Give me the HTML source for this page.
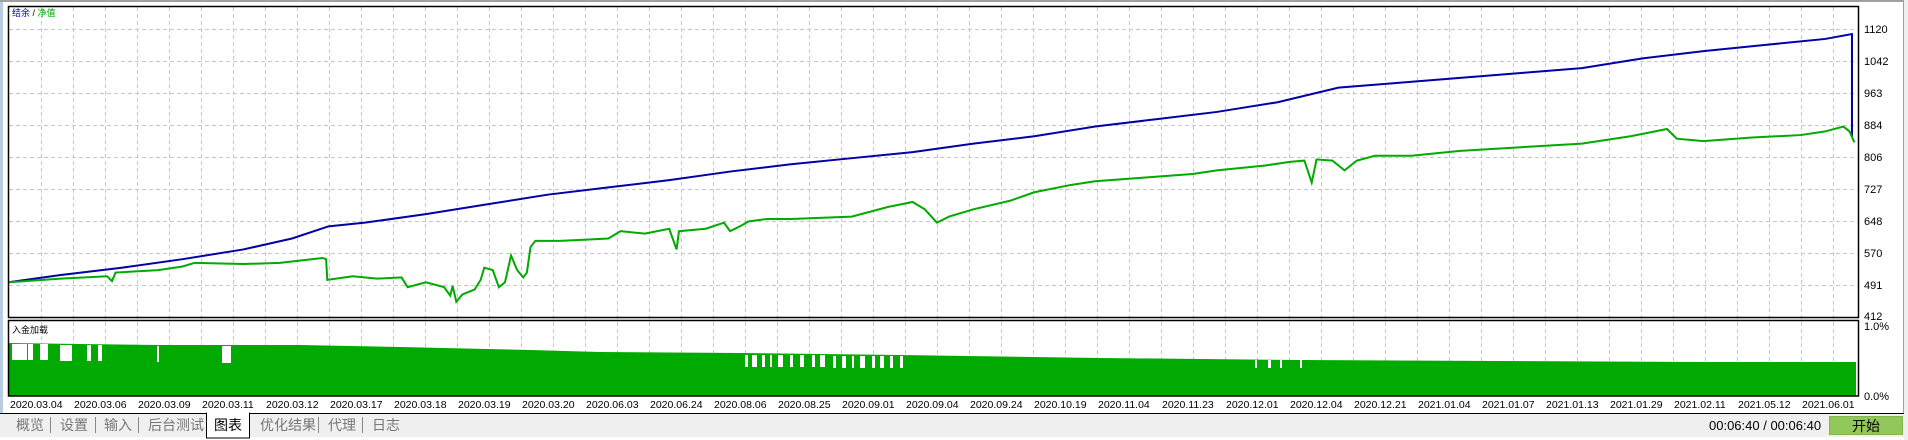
<!DOCTYPE html>
<html><head><meta charset="utf-8"><style>
html,body{margin:0;padding:0;background:#fff;width:1908px;height:440px;overflow:hidden;font-family:"Liberation Sans","Noto Sans CJK SC",sans-serif}
svg{position:absolute;left:0;top:0}
.tab{position:absolute;top:415px;font-size:14px;color:#777;font-family:"Liberation Sans","Noto Sans CJK SC",sans-serif}
.sep{position:absolute;top:417px;width:1px;height:16px;background:#888}
</style></head><body>
<svg width="1908" height="440" xmlns="http://www.w3.org/2000/svg" font-family="Liberation Sans, Noto Sans CJK SC, sans-serif">
<rect x="0" y="0" width="1908" height="440" fill="#fff"/>
<rect x="0" y="0" width="1908" height="2" fill="#a0a0a0"/>
<rect x="0" y="2" width="3" height="438" fill="#b9cde2"/>
<rect x="0" y="413" width="1908" height="27" fill="#f0f0f0"/>
<rect x="0" y="437" width="1908" height="3" fill="#fff"/>
<line x1="0" y1="413.5" x2="1904" y2="413.5" stroke="#000" stroke-width="1"/>
<rect x="1904" y="0" width="4" height="440" fill="#f0f0f0"/>
<line x1="1903.5" y1="2" x2="1903.5" y2="413" stroke="#a0a0a0"/>
<g stroke="#c8c8c8" stroke-width="1" stroke-dasharray="4,3">
<path id="vg" d="M41.5 7V396M73.5 7V396M105.5 7V396M137.5 7V396M169.5 7V396M201.5 7V396M233.5 7V396M265.5 7V396M297.5 7V396M329.5 7V396M361.5 7V396M393.5 7V396M425.5 7V396M457.5 7V396M489.5 7V396M521.5 7V396M553.5 7V396M585.5 7V396M617.5 7V396M649.5 7V396M681.5 7V396M713.5 7V396M745.5 7V396M777.5 7V396M809.5 7V396M841.5 7V396M873.5 7V396M905.5 7V396M937.5 7V396M969.5 7V396M1001.5 7V396M1033.5 7V396M1065.5 7V396M1097.5 7V396M1129.5 7V396M1161.5 7V396M1193.5 7V396M1225.5 7V396M1257.5 7V396M1289.5 7V396M1321.5 7V396M1353.5 7V396M1385.5 7V396M1417.5 7V396M1449.5 7V396M1481.5 7V396M1513.5 7V396M1545.5 7V396M1577.5 7V396M1609.5 7V396M1641.5 7V396M1673.5 7V396M1705.5 7V396M1737.5 7V396M1769.5 7V396M1801.5 7V396M1833.5 7V396"/>
<path d="M9 29.5H1858M9 61.5H1858M9 93.5H1858M9 125.5H1858M9 157.5H1858M9 189.5H1858M9 221.5H1858M9 253.5H1858M9 285.5H1858"/>
</g>
<!-- sub pane fill -->
<g fill="#00aa00">
<polygon points="9,343 80,344 160,345 300,345 400,347 530,350 600,352 740,353 900,355 1100,358 1300,360 1500,361 1700,362 1856,362 1856,396 9,396"/>
</g>
<g fill="#fff">
<rect x="12" y="344" width="15" height="16"/><rect x="28" y="344" width="5" height="16"/><rect x="40" y="344" width="8" height="16"/>
<rect x="60" y="345" width="12" height="16"/><rect x="87" y="345" width="4" height="16"/><rect x="98" y="345" width="4" height="16"/>
<rect x="157" y="346" width="2" height="16"/><rect x="222" y="346" width="9" height="17"/>
<rect x="745" y="355" width="3" height="12"/><rect x="752" y="355" width="5" height="12"/><rect x="762" y="355" width="3" height="12"/><rect x="770" y="355" width="2" height="12"/><rect x="778" y="355" width="5" height="12"/><rect x="790" y="355" width="3" height="12"/><rect x="800" y="355" width="4" height="12"/><rect x="812" y="355" width="3" height="12"/><rect x="820" y="355" width="5" height="12"/><rect x="833" y="356" width="3" height="12"/><rect x="842" y="356" width="4" height="12"/><rect x="852" y="356" width="2" height="12"/><rect x="860" y="356" width="5" height="12"/><rect x="872" y="356" width="3" height="12"/><rect x="880" y="356" width="4" height="12"/><rect x="890" y="356" width="3" height="12"/><rect x="900" y="356" width="3" height="12"/>
<rect x="1255" y="360" width="2" height="8"/><rect x="1268" y="360" width="3" height="8"/><rect x="1280" y="360" width="2" height="8"/><rect x="1300" y="360" width="2" height="8"/>
</g>
<!-- curves -->
<g transform="scale(1.2168)" fill="none" stroke-linejoin="miter">
<polyline stroke="#0000a8" stroke-width="2" vector-effect="non-scaling-stroke" points="7,232 50,226 100,220 150,213 200,205 240,196 270,186 300,183 350,176 400,168 450,160 500,154 550,148 600,141 650,135 700,130 750,125 800,118 850,112 900,104 950,98 1000,92 1050,84 1100,72 1150,68 1200,64 1250,60 1300,56 1350,48 1400,42 1450,37 1500,32 1522,28 1522,112"/>
<polyline stroke="#00aa00" stroke-width="2" vector-effect="non-scaling-stroke" points="7,232 50,229 88,227 92,231 95,224 130,222 150,219 160,216 200,217 230,216 265,212 268,213 269,230 290,227 310,229 330,228 335,236 350,232 365,236 370,243 372,235 375,248 380,242 390,238 395,230 398,220 405,222 410,236 415,232 420,210 425,222 430,228 433,224 436,203 440,198 460,198 480,197 500,196 510,190 530,192 550,188 556,205 558,190 580,188 595,183 600,190 610,185 615,182 630,180 650,180 700,178 730,170 750,166 760,172 770,183 780,178 800,172 830,165 850,158 880,152 900,149 940,146 980,143 1000,140 1040,136 1060,133 1072,132 1078,150 1082,131 1095,132 1105,140 1115,132 1130,128 1160,128 1200,124 1250,121 1300,118 1340,112 1370,106 1378,114 1400,116 1440,113 1480,111 1500,108 1515,104 1520,108 1524,117"/>
</g>
<!-- frames -->
<rect x="8.5" y="6.5" width="1850" height="311" fill="none" stroke="#000" stroke-width="1.5"/>
<rect x="8.5" y="320.5" width="1850" height="75.5" fill="none" stroke="#000" stroke-width="1.5"/>
<text x="12" y="16" font-size="9" fill="#0000a8">结余 <tspan fill="#000">/</tspan> <tspan fill="#00aa00">净值</tspan></text>
<text x="12" y="333" font-size="9" fill="#000">入金加载</text>
<g font-size="11" fill="#000">
<text x="1864" y="33">1120</text><text x="1864" y="65">1042</text><text x="1864" y="97">963</text><text x="1864" y="129">884</text><text x="1864" y="161">806</text><text x="1864" y="193">727</text><text x="1864" y="225">648</text><text x="1864" y="257">570</text><text x="1864" y="289">491</text><text x="1864" y="320">412</text>
<text x="1864" y="330">1.0%</text><text x="1864" y="400">0.0%</text>
</g>
<g font-size="10.5" fill="#000">
<text x="10" y="408">2020.03.04</text><text x="74" y="408">2020.03.06</text><text x="138" y="408">2020.03.09</text><text x="202" y="408">2020.03.11</text><text x="266" y="408">2020.03.12</text><text x="330" y="408">2020.03.17</text><text x="394" y="408">2020.03.18</text><text x="458" y="408">2020.03.19</text><text x="522" y="408">2020.03.20</text><text x="586" y="408">2020.06.03</text><text x="650" y="408">2020.06.24</text><text x="714" y="408">2020.08.06</text><text x="778" y="408">2020.08.25</text><text x="842" y="408">2020.09.01</text><text x="906" y="408">2020.09.04</text><text x="970" y="408">2020.09.24</text><text x="1034" y="408">2020.10.19</text><text x="1098" y="408">2020.11.04</text><text x="1162" y="408">2020.11.23</text><text x="1226" y="408">2020.12.01</text><text x="1290" y="408">2020.12.04</text><text x="1354" y="408">2020.12.21</text><text x="1418" y="408">2021.01.04</text><text x="1482" y="408">2021.01.07</text><text x="1546" y="408">2021.01.13</text><text x="1610" y="408">2021.01.29</text><text x="1674" y="408">2021.02.11</text><text x="1738" y="408">2021.05.12</text><text x="1802" y="408">2021.06.01</text>
</g>
<rect x="206.5" y="413" width="43" height="25" fill="#fff" stroke="#000"/>
<rect x="207" y="412" width="42" height="3" fill="#fff"/>
<text x="1709" y="430" font-size="13" fill="#000">00:06:40 / 00:06:40</text>
<rect x="1829.5" y="416.5" width="73" height="18" fill="#92c75c" stroke="#7fb84a"/>
<text x="1866" y="431" font-size="14" fill="#000" text-anchor="middle">开始</text>
</svg>
<div class="tab" style="left:16px">概览</div><div class="sep" style="left:50px"></div>
<div class="tab" style="left:60px">设置</div><div class="sep" style="left:95px"></div>
<div class="tab" style="left:104px">输入</div><div class="sep" style="left:138px"></div>
<div class="tab" style="left:148px">后台测试</div>
<div class="tab" style="left:214px;color:#000">图表</div>
<div class="tab" style="left:260px">优化结果</div><div class="sep" style="left:318px"></div>
<div class="tab" style="left:328px">代理</div><div class="sep" style="left:362px"></div>
<div class="tab" style="left:372px">日志</div>
</body></html>
